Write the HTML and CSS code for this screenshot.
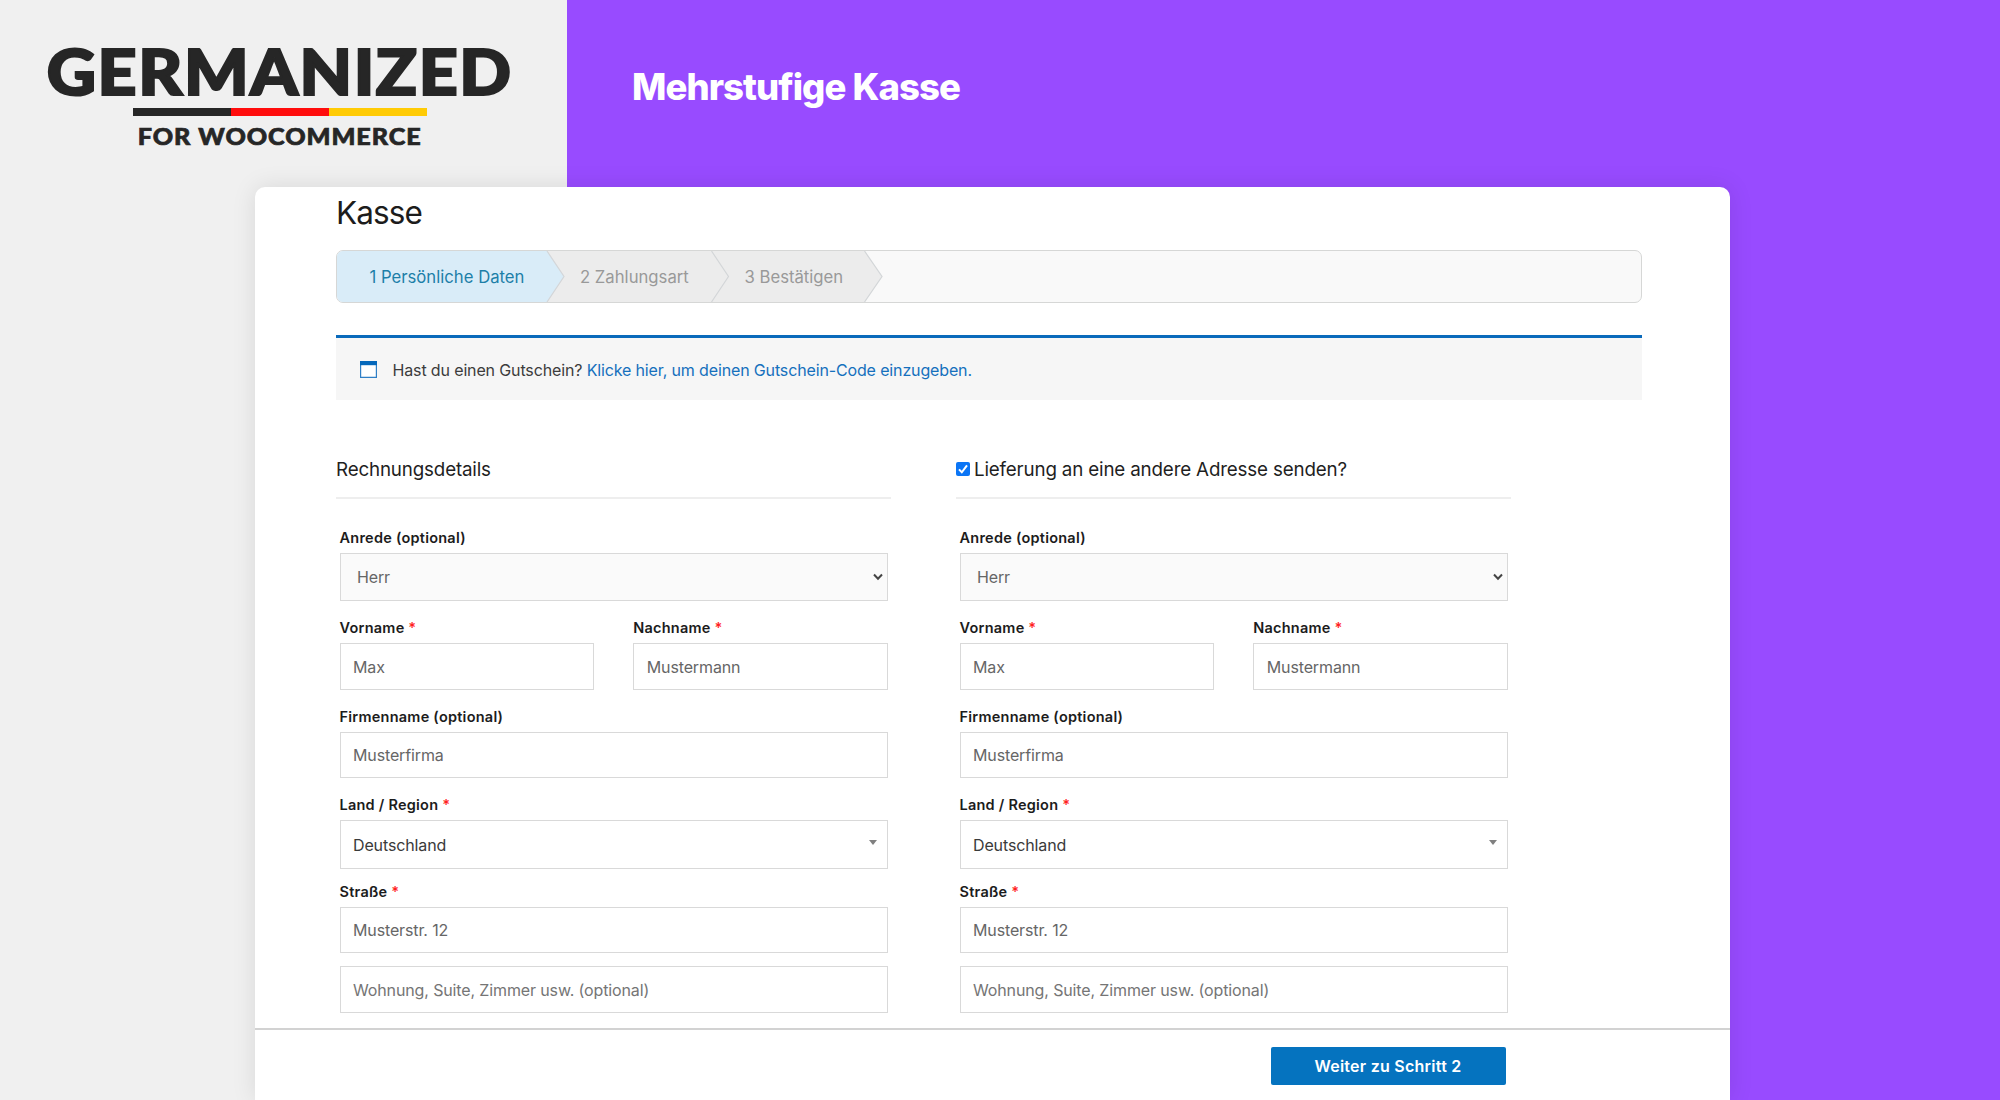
FILE: index.html
```html
<!DOCTYPE html>
<html lang="de">
<head>
<meta charset="utf-8">
<title>Mehrstufige Kasse</title>
<link rel="stylesheet" href="styles.css">
</head>
<body>
<header class="banner">
  <div class="brand">
    <div class="brand-name">GERMANIZED</div>
    <div class="flag"><i class="flag-black"></i><i class="flag-red"></i><i class="flag-gold"></i></div>
    <div class="brand-sub">FOR WOOCOMMERCE</div>
  </div>
  <h1 class="banner-title">Mehrstufige Kasse</h1>
</header>
<main class="card">
  <div class="content">
    <h2 class="page-title">Kasse</h2>
    <div class="steps">
      <svg class="step-shapes" viewBox="0 0 550 51" width="550" height="51"><path class="fill-idle" d="M0 0H527.500L545 25.500L527.500 51H0Z"/><path class="fill-active" d="M0 0H210L227 25.500L210 51H0Z"/><path class="edge" d="M210 0L227 25.500L210 51M374.500 0L391.500 25.500L374.500 51M527.500 0L545 25.500L527.500 51"/></svg>
      <span class="step step-1 active">1 Persönliche Daten</span>
      <span class="step step-2">2 Zahlungsart</span>
      <span class="step step-3">3 Bestätigen</span>
    </div>
    <div class="notice">
      <svg class="notice-icon" viewBox="0 0 17 17" width="17" height="17"><path d="M.6 1H16.400V16.400H.6Z" fill="#fff" stroke="#2f7fc6" stroke-width="1.2"/><path d="M0 0H17V4.200H0Z" fill="#0568bb"/></svg>
      <p>Hast du einen Gutschein? <a>Klicke hier, um deinen Gutschein-Code einzugeben.</a></p>
    </div>
    <form class="columns">
      <section class="column">
        <h3 class="column-title">Rechnungsdetails</h3>
        <div class="fields">
          <div class="field"><label>Anrede (optional)</label><div class="input select"><span>Herr</span><svg class="chevron" viewBox="0 0 10 8" width="10" height="8"><path d="M1 1.500L5 5.700L9 1.500"/></svg></div></div>
          <div class="pair">
            <div class="field"><label>Vorname <b>*</b></label><div class="input tall">Max</div></div>
            <div class="field"><label>Nachname <b>*</b></label><div class="input tall">Mustermann</div></div>
          </div>
          <div class="field"><label>Firmenname (optional)</label><div class="input">Musterfirma</div></div>
          <div class="field"><label>Land / Region <b>*</b></label><div class="input country"><span>Deutschland</span><i class="caret"></i></div></div>
          <div class="field street"><label>Straße <b>*</b></label><div class="input">Musterstr. 12</div><div class="input tall hint">Wohnung, Suite, Zimmer usw. (optional)</div></div>
        </div>
      </section>
      <section class="column">
        <h3 class="column-title"><svg class="check" viewBox="0 0 14 14" width="14" height="14"><rect width="14" height="14" rx="2" fill="#0b75f5"/><path d="M3 7.400L5.800 10.300L11 3.300" fill="none" stroke="#fff" stroke-width="2"/></svg>Lieferung an eine andere Adresse senden?</h3>
        <div class="fields">
          <div class="field"><label>Anrede (optional)</label><div class="input select"><span>Herr</span><svg class="chevron" viewBox="0 0 10 8" width="10" height="8"><path d="M1 1.500L5 5.700L9 1.500"/></svg></div></div>
          <div class="pair">
            <div class="field"><label>Vorname <b>*</b></label><div class="input tall">Max</div></div>
            <div class="field"><label>Nachname <b>*</b></label><div class="input tall">Mustermann</div></div>
          </div>
          <div class="field"><label>Firmenname (optional)</label><div class="input">Musterfirma</div></div>
          <div class="field"><label>Land / Region <b>*</b></label><div class="input country"><span>Deutschland</span><i class="caret"></i></div></div>
          <div class="field street"><label>Straße <b>*</b></label><div class="input">Musterstr. 12</div><div class="input tall hint">Wohnung, Suite, Zimmer usw. (optional)</div></div>
        </div>
      </section>
    </form>
  </div>
  <footer class="actions"><button class="next">Weiter zu Schritt 2</button></footer>
</main>
</body>
</html>
```
FILE: styles.css
```css
* { box-sizing: border-box; }
body {
  margin: 0;
  width: 2000px;
  height: 1100px;
  overflow: hidden;
  display: flex;
  flex-direction: column;
  font-family: Inter, "Liberation Sans", sans-serif;
  color: #333;
  background: linear-gradient(90deg, #f0f0f0 567px, #984bff 567px);
}
h1, h2, h3, p { margin: 0; font-weight: 400; }
.banner { display: flex; height: 187px; flex: none; }
.brand {
  width: 567px;
  padding: 40px 7px 0 0;
  display: flex;
  flex-direction: column;
  align-items: center;
  color: #262626;
  font-family: Lato, sans-serif;
  font-weight: 900;
  white-space: nowrap;
}
.brand-name {
  height: 68px;
  font-size: 63.500px;
  line-height: 62px;
  letter-spacing: 1.500px;
  -webkit-text-stroke: 2.200px #262626;
  transform: scaleX(1.07);
}
.flag { display: flex; width: 294px; height: 8px; }
.flag i { flex: 1; }
.flag-black { background: #262626; }
.flag-red { background: #ff0d0d; }
.flag-gold { background: #ffcb05; }
.brand-sub {
  margin-top: 8px;
  font-size: 23.500px;
  line-height: 24px;
  letter-spacing: .9px;
  -webkit-text-stroke: .7px #262626;
  transform: scaleX(1.07);
}
.banner-title {
  margin-left: 65px;
  padding-top: 67px;
  font-size: 36.500px;
  line-height: 40px;
  font-weight: 800;
  letter-spacing: -.95px;
  color: #fff;
}

.card {
  flex: none;
  width: 1475px;
  height: 913px;
  margin-left: 255px;
  background: #fff;
  border-radius: 10px 10px 0 0;
  box-shadow: 0 0 24px rgba(0, 0, 0, .1);
  display: flex;
  flex-direction: column;
}
.content { height: 841px; padding: 6px 88.500px 0 81px; }
.page-title { height: 57px; font-size: 31.500px; line-height: 40px; letter-spacing: -.9px; color: #1c1c1c; }
.steps {
  position: relative;
  display: flex;
  height: 53px;
  border: 1px solid #d6d7d6;
  border-radius: 7px;
  background: #f9f9f9;
  overflow: hidden;
}
.step { position: relative; font-size: 16.700px; line-height: 53px; color: #999; white-space: nowrap; }
.step-1 { width: 243px; padding-left: 32.500px; }
.step-2 { width: 164.500px; }
.step.active { color: #1d7fa8; }
.step-shapes { position: absolute; left: 0; top: 0; }
.fill-idle { fill: #ececec; }
.fill-active { fill: #d9ecf8; }
.edge { fill: none; stroke: #d3d6d8; stroke-width: 1.200; }
.notice {
  margin-top: 32px;
  height: 65px;
  border-top: 3px solid #0a6abb;
  background: #f6f6f6;
  display: flex;
  align-items: center;
  gap: 15.500px;
  padding-left: 24px;
  font-size: 16px;
  letter-spacing: -.14px;
  color: #3c3c3c;
  white-space: nowrap;
}
.notice p { padding-top: 1px; }
.notice a { color: #1570bd; }
.columns { margin-top: 47px; display: flex; gap: 65px; }
.column { width: 555px; }
.column-title {
  height: 52px;
  padding-bottom: 6px;
  border-bottom: 2px solid #eee;
  display: flex;
  align-items: center;
  font-size: 18.800px;
  letter-spacing: -.17px;
  color: #1f1f1f;
  white-space: nowrap;
}
.check { margin-right: 4px; }
.fields { padding: 29px 3px 0 3.500px; display: flex; flex-direction: column; gap: 17px; }
.pair { display: grid; grid-template-columns: 1fr 1fr; gap: 39px; }
label {
  display: block;
  height: 25px;
  font-size: 14.500px;
  line-height: 20px;
  font-weight: 600;
  letter-spacing: .24px;
  color: #1c1c1c;
  white-space: nowrap;
}
label b { color: #ff1f1f; font-weight: 600; }
.input {
  display: flex;
  align-items: center;
  height: 46px;
  padding-left: 12.500px;
  border: 1px solid #d9d9d9;
  background: #fff;
  font-size: 16px;
  letter-spacing: -.13px;
  color: #666;
  white-space: nowrap;
}
.tall { height: 47px; }
.select { height: 48px; padding: 0 4px 0 16.500px; justify-content: space-between; background: #fafafa; }
.chevron path { fill: none; stroke: #444; stroke-width: 2; }
.country { height: 49px; padding-right: 10px; justify-content: space-between; color: #3a3a3a; }
.caret { border: 4px solid transparent; border-top: 5px solid #808080; border-bottom: 0; margin-top: -4px; }
.street { margin-top: -4px; }
.hint { margin-top: 13px; color: #757575; }
.actions {
  height: 72px;
  border-top: 2px solid #d2d2d2;
  padding: 17px 224.500px 0 0;
  display: flex;
  justify-content: flex-end;
  align-items: flex-start;
}
.next {
  width: 235px;
  height: 38px;
  padding: 0;
  border: 0;
  border-radius: 2px;
  background: #0573bf;
  color: #fff;
  font: 600 16px Inter, sans-serif;
  letter-spacing: .25px;
  white-space: nowrap;
}
```
